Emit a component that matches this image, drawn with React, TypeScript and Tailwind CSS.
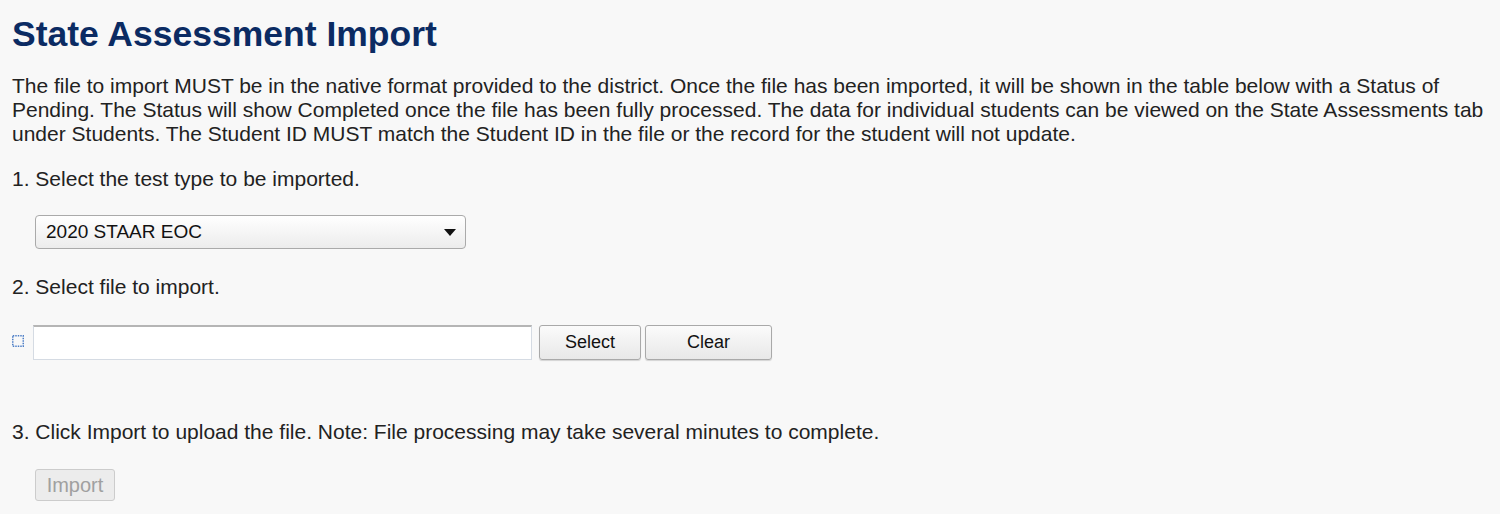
import React from "react";

export default function App() {
  const font = { fontFamily: '"Liberation Sans", Arial, sans-serif' };
  return (
    <div className="min-h-[514px] w-[1500px] bg-[#f8f8f8] text-[#222222] pl-[12px] pt-[12px]" style={font}>
      <h1 className="text-[35.5px] font-bold leading-[44px] text-[#0b2b63]">State Assessment Import</h1>
      <p className="mt-[18px] text-[21px] leading-[24px] pr-[8px]">
        The file to import MUST be in the native format provided to the district. Once the file has been imported, it will be shown in the table below with a Status of Pending. The Status will show Completed once the file has been fully processed. The data for individual students can be viewed on the State Assessments tab under Students. The Student ID MUST match the Student ID in the file or the record for the student will not update.
      </p>
      <div className="mt-[21px] text-[21px] leading-[24px]">1. Select the test type to be imported.</div>
      <div className="mt-[24px] pl-[23px]">
        <div className="flex h-[34px] w-[431px] items-center justify-between rounded-[4px] border border-[#aaaaaa] bg-gradient-to-b from-[#ffffff] to-[#ececec] pl-[10px] pr-[9px] text-[19px] text-[#111]">
          <span>2020 STAAR EOC</span>
          <svg width="12" height="7" viewBox="0 0 12 7"><path d="M0 0 H12 L6 7 Z" fill="#111" /></svg>
        </div>
      </div>
      <div className="mt-[26px] text-[21px] leading-[24px]">2. Select file to import.</div>
      <div className="mt-[26px] flex items-center">
        <svg width="12" height="12" viewBox="0 0 12 12" className="mt-[-4px]">
          <rect x="0.75" y="0.75" width="10.5" height="10.5" fill="none" stroke="#4f7fc6" strokeWidth="1.5" strokeDasharray="1.5 1" />
        </svg>
        <div className="ml-[9px] h-[35px] w-[499px] border border-[#d5dbe3] border-t-[2px] border-t-[#b5b5b5] bg-white" />
        <button className="ml-[7px] h-[35px] w-[102px] rounded-[3px] border border-[#a9a9a9] bg-gradient-to-b from-[#fbfbfb] to-[#e8e8e8] text-[18px] text-[#111] shadow-[0_1px_1px_rgba(0,0,0,0.15)]">Select</button>
        <button className="ml-[4px] h-[35px] w-[127px] rounded-[3px] border border-[#a9a9a9] bg-gradient-to-b from-[#fbfbfb] to-[#e8e8e8] text-[18px] text-[#111] shadow-[0_1px_1px_rgba(0,0,0,0.15)]">Clear</button>
      </div>
      <div className="mt-[60px] text-[21px] leading-[24px]">3. Click Import to upload the file. Note: File processing may take several minutes to complete.</div>
      <div className="mt-[25px] pl-[23px]">
        <button className="h-[32px] w-[80px] rounded-[3px] border border-[#cccccc] bg-[#ececec] text-[20px] text-[#a0a0a0]">Import</button>
      </div>
    </div>
  );
}
